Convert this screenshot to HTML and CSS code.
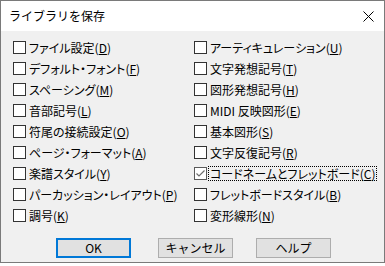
FILE: index.html
```html
<!DOCTYPE html>
<html lang="ja">
<head>
    <meta charset="UTF-8">
    <title>ライブラリを保存</title>
    <link rel="stylesheet" href="styles.css">
</head>
<body>
    <div class="window">
        <div class="titlebar">
            <span class="title">ライブラリを保存</span>
            <svg class="close" width="11" height="11" viewBox="0 0 11 11">
                <path d="M0.5 0.5 L10.5 10.5 M10.5 0.5 L0.5 10.5" stroke="#000" stroke-width="1" fill="none"/>
            </svg>
        </div>

        <div class="content">
            <div class="columns">
                <!-- left column -->
                <div class="col">
                    <label class="item"><span class="box"></span><span class="text">ファイル設定(<u>D</u>)</span></label>
                    <label class="item"><span class="box"></span><span class="text">デフォルト・フォント(<u>F</u>)</span></label>
                    <label class="item"><span class="box"></span><span class="text">スペーシング(<u>M</u>)</span></label>
                    <label class="item"><span class="box"></span><span class="text">音部記号(<u>L</u>)</span></label>
                    <label class="item"><span class="box"></span><span class="text">符尾の接続設定(<u>O</u>)</span></label>
                    <label class="item"><span class="box"></span><span class="text">ページ・フォーマット(<u>A</u>)</span></label>
                    <label class="item"><span class="box"></span><span class="text">楽譜スタイル(<u>Y</u>)</span></label>
                    <label class="item"><span class="box"></span><span class="text">パーカッション・レイアウト(<u>P</u>)</span></label>
                    <label class="item"><span class="box"></span><span class="text">調号(<u>K</u>)</span></label>
                </div>

                <!-- right column -->
                <div class="col">
                    <label class="item"><span class="box"></span><span class="text">アーティキュレーション(<u>U</u>)</span></label>
                    <label class="item"><span class="box"></span><span class="text">文字発想記号(<u>T</u>)</span></label>
                    <label class="item"><span class="box"></span><span class="text">図形発想記号(<u>H</u>)</span></label>
                    <label class="item"><span class="box"></span><span class="text">MIDI 反映図形(<u>E</u>)</span></label>
                    <label class="item"><span class="box"></span><span class="text">基本図形(<u>S</u>)</span></label>
                    <label class="item"><span class="box"></span><span class="text">文字反復記号(<u>R</u>)</span></label>
                    <label class="item">
                        <span class="box checked">
                            <svg width="11" height="11" viewBox="0 0 11 11">
                                <path d="M1.5 5.5 L4 8 L9.5 2.5" stroke="#6d6d6d" stroke-width="1.2" fill="none"/>
                            </svg>
                        </span>
                        <span class="text focused">コードネームとフレットボード(<u>C</u>)</span>
                    </label>
                    <label class="item"><span class="box"></span><span class="text">フレットボードスタイル(<u>B</u>)</span></label>
                    <label class="item"><span class="box"></span><span class="text">変形線形(<u>N</u>)</span></label>
                </div>
            </div>

            <div class="buttons">
                <button class="btn btn-ok">OK</button>
                <button class="btn btn-cancel">キャンセル</button>
                <button class="btn btn-help">ヘルプ</button>
            </div>
        </div>
    </div>
</body>
</html>
```

FILE: styles.css
```css
/* Windows style dialog */
body {
    margin: 0;
    padding: 0;
    background-color: #ffffff;
    font-family: 'Noto Sans CJK JP', 'Noto Sans', sans-serif;
    font-size: 12px;
    color: #000;
}

.window {
    width: 385px;
    height: 263px;
    box-sizing: border-box;
    border: 1px solid #7a7a7a;
    display: flex;
    flex-direction: column;
    background-color: #f0f0f0;
}

.titlebar {
    height: 30px;
    background-color: #ffffff;
    display: flex;
    align-items: center;
    justify-content: space-between;
    padding: 0 10px 0 8px;
    flex-shrink: 0;
}

.title {
    font-size: 12px;
    margin-top: -1px;
}

.close {
    display: block;
}

.content {
    flex: 1;
    padding-top: 6px;
}

.columns {
    display: grid;
    grid-template-columns: 181px 1fr;
    padding-left: 12px;
}

.item {
    height: 21px;
    display: flex;
    align-items: center;
    white-space: nowrap;
}

.box {
    width: 13px;
    height: 13px;
    box-sizing: border-box;
    border: 1px solid #333;
    background-color: #fff;
    margin-right: 3px;
    flex-shrink: 0;
    display: flex;
    align-items: center;
    justify-content: center;
}

.box.checked {
    border-color: #5a5a5a;
}

.box svg {
    display: block;
}

.text {
    line-height: 13px;
    font-feature-settings: "palt";
    border: 1px dotted transparent;
    padding: 0 1px;
    margin-left: -2px;
}

.text u {
    text-underline-offset: 1px;
}

.text.focused {
    border-color: #000;
}

/* Buttons */
.buttons {
    display: flex;
    margin-top: 12px;
    padding-left: 55px;
}

.btn {
    width: 75px;
    height: 20px;
    box-sizing: border-box;
    background-color: #e1e1e1;
    border: 1px solid #adadad;
    font-family: 'Noto Sans CJK JP', 'Noto Sans', sans-serif;
    font-size: 12px;
    line-height: 16px;
    padding: 0;
    color: #000;
}

.btn-ok {
    border: 2px solid #0078d7;
}

.btn-cancel {
    margin-left: 27px;
}

.btn-help {
    margin-left: 23px;
}
```
